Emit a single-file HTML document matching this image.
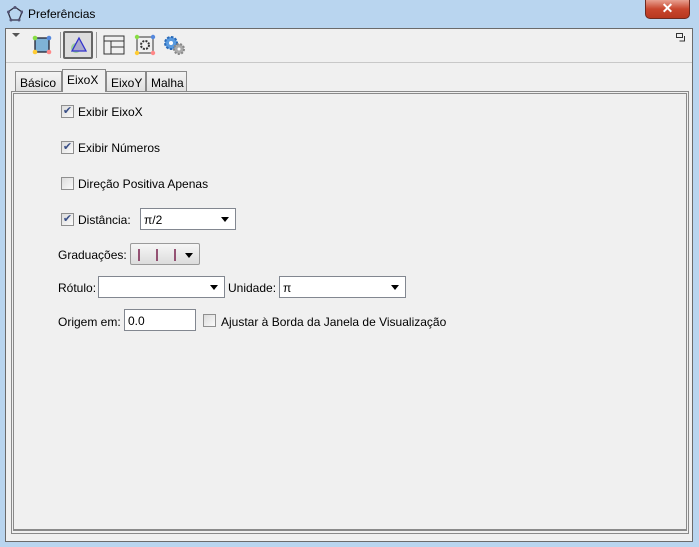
<!DOCTYPE html>
<html><head><meta charset="utf-8"><style>
*{box-sizing:border-box;margin:0;padding:0}
body{width:699px;height:547px;background:#b9d5ef;font-family:"Liberation Sans",sans-serif;font-size:12px;color:#000;position:relative;overflow:hidden}
.abs{position:absolute}
.title{left:28px;top:7px;font-size:12px;color:#000}
.close{left:645px;top:0;width:45px;height:19px;background:linear-gradient(#e8a090,#c8462e 50%,#b83820);border:1px solid #6e2a20;border-top:none;border-radius:0 0 5px 5px;color:#fff;font-weight:bold;text-align:center;font-size:14px;line-height:17px}
.client{left:5px;top:28px;width:688px;height:514px;background:#f0f0f0;border:1px solid #6b6b6b}
.cb{width:13px;height:13px;border:1px solid #8f8f8f;background:linear-gradient(135deg,#dcdcdc,#fafafa);font-size:11px;line-height:11px;text-align:center;color:#3a4f86}
.lbl{font-size:12px}
.combo{height:22px;border:1px solid #828790;background:#fff}
.arr{position:absolute;right:6px;top:8px;width:0;height:0;border-left:4px solid transparent;border-right:4px solid transparent;border-top:5px solid #000}
.tab{top:71px;height:20px;border:1px solid #8a8a8a;border-bottom:none;background:linear-gradient(#f4f4f4,#e0e0e0);padding:4px 4px 0;font-size:12px}
</style></head><body>
<svg class="abs" style="left:7px;top:6px" width="16" height="16"><polygon points="8,1 15,6 12,14 4,14 1,6" fill="none" stroke="#334" stroke-width="1.3"/><circle cx="8" cy="1.5" r="1.5" fill="#557"/><circle cx="15" cy="6" r="1.5" fill="#557"/><circle cx="12" cy="14" r="1.5" fill="#557"/><circle cx="4" cy="14" r="1.5" fill="#557"/><circle cx="1.5" cy="6" r="1.5" fill="#557"/></svg>
<div class="abs title">Preferências</div>
<div class="abs close">✕</div>
<div class="abs client"></div>
<div class="abs" style="left:12px;top:33px;width:0;height:0;border-left:4px solid transparent;border-right:4px solid transparent;border-top:4px solid #555"></div>
<svg class="abs" style="left:32px;top:35px" width="20" height="20"><rect x="3" y="3" width="14" height="14" fill="#7fb2d6" stroke="#223" stroke-width="1.3"/><circle cx="3" cy="3" r="2.3" fill="#8d4"/><circle cx="17" cy="3" r="2.3" fill="#58d"/><circle cx="3" cy="17" r="2.3" fill="#fc3"/><circle cx="17" cy="17" r="2.3" fill="#f88"/></svg>
<div class="abs" style="left:63px;top:31px;width:30px;height:28px;border:2px solid #666;background:#ddd;border-radius:2px"></div>
<svg class="abs" style="left:67px;top:36px" width="22" height="18"><circle cx="9" cy="12" r="5" fill="#8c8" opacity=".8"/><polygon points="12,2 19,15 5,15" fill="#aac" stroke="#33c" stroke-width="1.3"/></svg>
<div class="abs" style="left:60px;top:32px;width:1px;height:26px;background:#999"></div>
<div class="abs" style="left:96px;top:32px;width:1px;height:26px;background:#999"></div>
<svg class="abs" style="left:103px;top:35px" width="22" height="20"><rect x="1" y="1" width="20" height="18" fill="none" stroke="#333"/><line x1="1" y1="6" x2="21" y2="6" stroke="#333"/><line x1="8" y1="6" x2="8" y2="19" stroke="#333"/><line x1="8" y1="12" x2="21" y2="12" stroke="#333"/></svg>
<svg class="abs" style="left:134px;top:34px" width="22" height="22"><rect x="3" y="3" width="16" height="16" fill="none" stroke="#333"/><circle cx="11" cy="11" r="4" fill="none" stroke="#333" stroke-width="2" stroke-dasharray="2 1.2"/><circle cx="3" cy="3" r="2.2" fill="#8d4"/><circle cx="19" cy="3" r="2.2" fill="#58d"/><circle cx="3" cy="19" r="2.2" fill="#fc3"/><circle cx="19" cy="19" r="2.2" fill="#f88"/></svg>
<svg class="abs" style="left:162px;top:34px" width="24" height="22"><circle cx="9" cy="9" r="6" fill="#5a9be0" stroke="#2a6ab8" stroke-width="2" stroke-dasharray="2.5 1.5"/><circle cx="9" cy="9" r="2" fill="#fff"/><circle cx="17" cy="15" r="5" fill="#aaa" stroke="#888" stroke-width="2" stroke-dasharray="2 1.5"/><circle cx="17" cy="15" r="1.5" fill="#fff"/></svg>
<svg class="abs" style="left:676px;top:33px" width="10" height="9"><rect x="0.5" y="0.5" width="6" height="4" fill="none" stroke="#333"/><path d="M8.5 3v5h-5" fill="none" stroke="#333"/></svg>
<div class="abs" style="left:6px;top:62px;width:686px;height:1px;background:#c8c8c8"></div>
<div class="abs tab" style="left:15px;width:47px">Básico</div>
<div class="abs tab" style="left:62px;top:69px;height:23px;width:44px;background:#f0f0f0;padding-top:3px;z-index:2">EixoX</div>
<div class="abs tab" style="left:106px;width:40px">EixoY</div>
<div class="abs tab" style="left:146px;width:41px">Malha</div>
<div class="abs" style="left:11px;top:91px;width:678px;height:443px;border:1px solid #8a8a8a"></div>
<div class="abs" style="left:13px;top:93px;width:674px;height:437px;border:1px solid #8a8a8a"></div>
<div class="abs" style="left:13px;top:530px;width:674px;height:1px;background:#8a8a8a"></div>

<div class="abs cb" style="left:61px;top:105px">✔</div><div class="abs lbl" style="left:78px;top:105px">Exibir EixoX</div>
<div class="abs cb" style="left:61px;top:141px">✔</div><div class="abs lbl" style="left:78px;top:141px">Exibir Números</div>
<div class="abs cb" style="left:61px;top:177px"></div><div class="abs lbl" style="left:78px;top:177px">Direção Positiva Apenas</div>
<div class="abs cb" style="left:61px;top:213px">✔</div><div class="abs lbl" style="left:78px;top:213px">Distância:</div>
<div class="abs combo" style="left:140px;top:208px;width:96px"><span style="position:absolute;left:3px;top:4px">π/2</span><div class="arr"></div></div>
<div class="abs lbl" style="left:58px;top:248px">Graduações:</div>
<div class="abs" style="left:130px;top:243px;width:70px;height:22px;border:1px solid #9a9a9a;border-radius:2px;background:linear-gradient(#f6f6f6,#dcdcdc)"><svg class="abs" style="left:6px;top:5px" width="44" height="12"><g stroke="#603" stroke-width="1.3"><line x1="2" y1="0" x2="2" y2="12"/><line x1="20" y1="0" x2="20" y2="12"/><line x1="38" y1="0" x2="38" y2="12"/></g></svg><div class="arr" style="top:9px"></div></div>
<div class="abs lbl" style="left:58px;top:281px">Rótulo:</div>
<div class="abs combo" style="left:98px;top:276px;width:127px"><div class="arr"></div></div>
<div class="abs lbl" style="left:228px;top:281px">Unidade:</div>
<div class="abs combo" style="left:279px;top:276px;width:127px"><span style="position:absolute;left:3px;top:4px">π</span><div class="arr"></div></div>
<div class="abs lbl" style="left:58px;top:315px">Origem em:</div>
<div class="abs combo" style="left:124px;top:309px;width:72px"><span style="position:absolute;left:3px;top:4px">0.0</span></div>
<div class="abs cb" style="left:203px;top:314px"></div><div class="abs lbl" style="left:221px;top:315px">Ajustar à Borda da Janela de Visualização</div>
</body></html>
